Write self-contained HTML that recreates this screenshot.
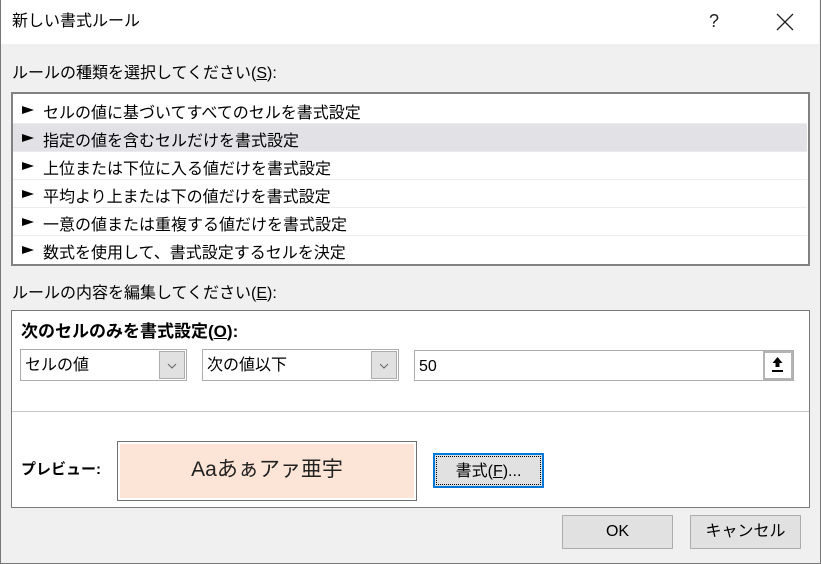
<!DOCTYPE html>
<html><head><meta charset="utf-8"><style>
*{margin:0;padding:0;box-sizing:border-box}
body{width:821px;height:564px;overflow:hidden;background:#f0f0f0;font-family:"Liberation Sans","Noto Sans CJK JP",sans-serif;font-size:16px;color:#000;position:relative}
.a{position:absolute}
.win{left:0;top:0;width:821px;height:564px;border:1px solid #777;border-top:none}
.title{left:1px;top:0;width:818px;height:44px;background:#fff}
.t{white-space:nowrap;line-height:20px}
.row{left:0;width:794px;height:28px;border-bottom:1px solid #ececec}
.row span{position:absolute;left:30px;top:3px;white-space:nowrap}
.row i{position:absolute;left:9px;top:10px;width:0;height:0;border-left:12px solid #000;border-top:4px solid transparent;border-bottom:4px solid transparent;font-style:normal}
.combo{background:#fff;border:1px solid #adadad;height:32px}
.dd{position:absolute;right:1px;top:1px;width:26px;height:28px;background:#e1e1e1;border:1px solid #adadad}
.btn{background:#e1e1e1;border:1px solid #adadad;text-align:center}
</style></head><body>
<div class="a win"></div>
<div class="a title"></div>
<div class="a t" style="left:12px;top:12px;font-size:16px">新しい書式ルール</div>
<div class="a t" style="left:709px;top:11px;font-size:18px;color:#222">?</div>
<svg class="a" style="left:776px;top:13px" width="18" height="18"><path d="M1 1L17 17M17 1L1 17" stroke="#222" stroke-width="1.3"/></svg>

<div class="a t" style="left:12px;top:64px">ルールの種類を選択してください(<u>S</u>):</div>
<div class="a" style="left:11px;top:92px;width:799px;height:174px;border:2px solid #828282;background:#fff;overflow:hidden">
 <div class="a row" style="top:2px"><i></i><span>セルの値に基づいてすべてのセルを書式設定</span></div>
 <div class="a row" style="top:30px;background:#e2e2e6"><i></i><span>指定の値を含むセルだけを書式設定</span></div>
 <div class="a row" style="top:58px"><i></i><span>上位または下位に入る値だけを書式設定</span></div>
 <div class="a row" style="top:86px"><i></i><span>平均より上または下の値だけを書式設定</span></div>
 <div class="a row" style="top:114px"><i></i><span>一意の値または重複する値だけを書式設定</span></div>
 <div class="a row" style="top:142px;border:none"><i></i><span>数式を使用して、書式設定するセルを決定</span></div>
</div>

<div class="a t" style="left:12px;top:284px">ルールの内容を編集してください(<u>E</u>):</div>
<div class="a" style="left:11px;top:310px;width:799px;height:198px;border:1px solid #7a7a7a;background:#fff"></div>
<div class="a t" style="left:21px;top:322px;font-weight:bold;font-size:17px">次のセルのみを書式設定(<u>O</u>):</div>
<div class="a combo" style="left:20px;top:349px;width:167px"><div class="a t" style="left:4px;top:6px">セルの値</div><div class="dd"><svg width="24" height="26"><path d="M8 12l4 4 4-4" fill="none" stroke="#666"/></svg></div></div>
<div class="a combo" style="left:202px;top:349px;width:197px"><div class="a t" style="left:4px;top:6px">次の値以下</div><div class="dd"><svg width="24" height="26"><path d="M8 12l4 4 4-4" fill="none" stroke="#666"/></svg></div></div>
<div class="a" style="left:414px;top:350px;width:380px;height:31px;background:#fff;border:1px solid #adadad"><div class="a t" style="left:4px;top:6px">50</div>
 <div class="a" style="right:0;top:0;width:30px;height:29px;border:2px solid #b4b4b4;background:#fff"><svg width="26" height="25"><path d="M12.5 4l5 6h-3v4h-4v-4h-3z" fill="#000"/><rect x="7" y="17" width="11" height="2" fill="#000"/></svg></div></div>
<div class="a" style="left:12px;top:411px;width:797px;height:1px;background:#c8c8c8"></div>
<div class="a t" style="left:21px;top:460px;font-weight:bold;font-size:15px">プレビュー:</div>
<div class="a" style="left:117px;top:441px;width:300px;height:60px;border:1px solid #707070;background:#fff;padding:2px"><div style="width:100%;height:100%;background:#fce4d6;text-align:center;line-height:52px;font-size:21px;color:#222">Aaあぁアァ亜宇</div></div>
<div class="a btn" style="left:433px;top:453px;width:111px;height:35px;border:2px solid #0078d7;padding:1px"><div style="border:1px dotted #000;height:100%;line-height:29px">書式(<u>F</u>)...</div></div>
<div class="a btn" style="left:562px;top:515px;width:111px;height:34px;line-height:32px">OK</div>
<div class="a btn" style="left:690px;top:515px;width:111px;height:34px;line-height:32px">キャンセル</div>
</body></html>
